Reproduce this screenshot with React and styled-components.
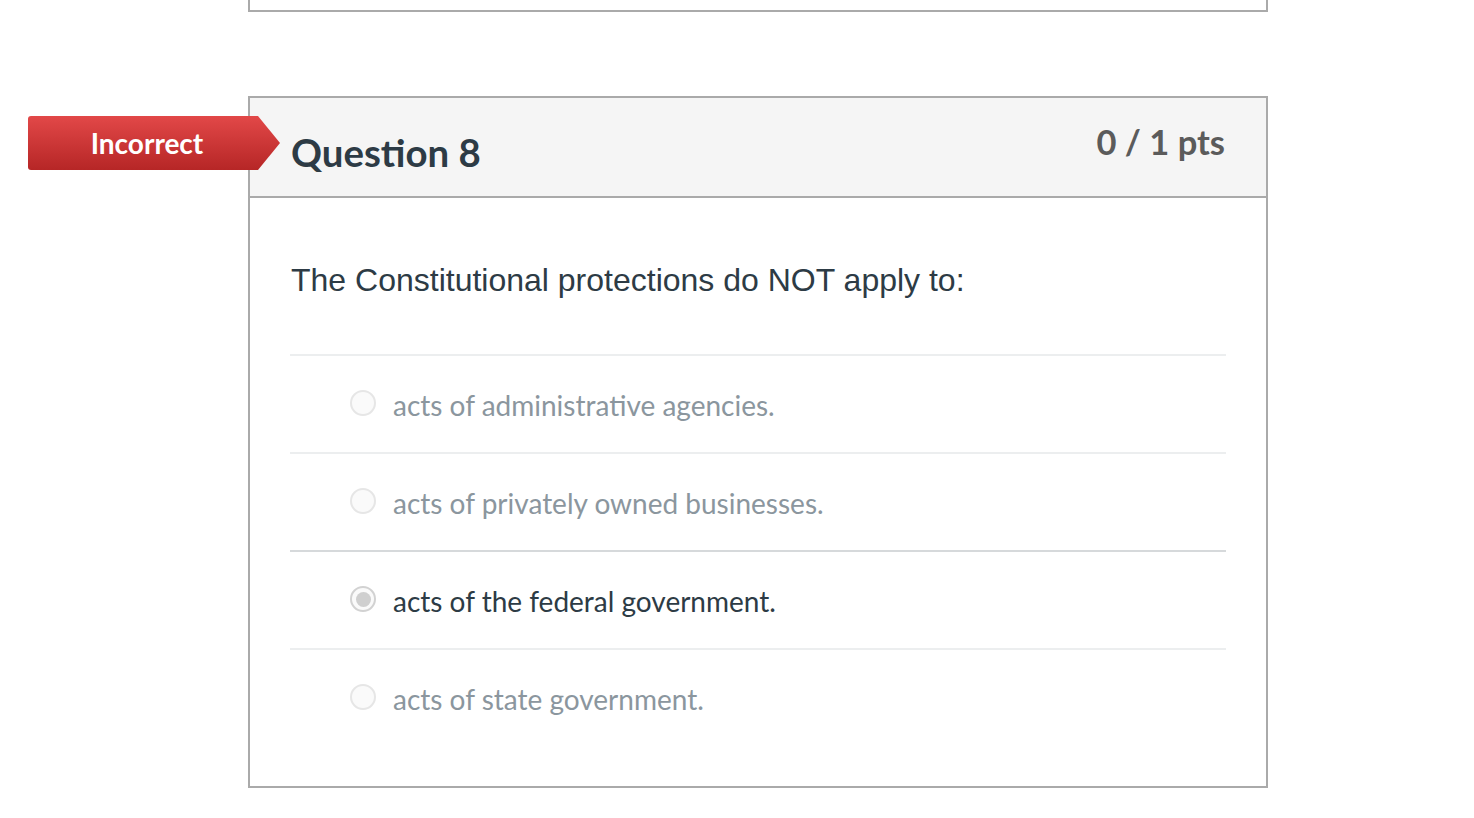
import React from 'react'
import styled, { createGlobalStyle } from 'styled-components'

const GlobalStyle = createGlobalStyle`
  body {
    margin: 0;
    background: #fff;
    font-family: Lato, "Open Sans", sans-serif;
  }
`

const answers = [
  { text: 'acts of administrative agencies.', selected: false },
  { text: 'acts of privately owned businesses.', selected: false },
  { text: 'acts of the federal government.', selected: true },
  { text: 'acts of state government.', selected: false },
]

const App = () => (
  <Page>
    <GlobalStyle />
    <PrevCard />
    <Card>
      <Badge>Incorrect</Badge>
      <Header>
        <Title>Question 8</Title>
        <Points>0 / 1 pts</Points>
      </Header>
      <Body>
        <QuestionText>The Constitutional protections do NOT apply to:</QuestionText>
        <Answers>
          {answers.map((a) => (
            <Answer key={a.text} selected={a.selected}>
              <Radio selected={a.selected} />
              <AnswerText selected={a.selected}>{a.text}</AnswerText>
            </Answer>
          ))}
        </Answers>
      </Body>
    </Card>
  </Page>
)

const Page = styled.div`
  width: 1020px;
  margin-left: 248px;
`

const PrevCard = styled.div`
  height: 10px;
  border: 2px solid #aaa;
  border-top: none;
`

const Card = styled.div`
  position: relative;
  margin-top: 84px;
  border: 2px solid #aaa;
`

// ribbon that sticks out to the left of the card
const Badge = styled.div`
  position: absolute;
  left: -222px;
  top: 18px;
  width: 252px;
  height: 54px;
  box-sizing: border-box;
  padding-right: 14px;
  display: flex;
  align-items: center;
  justify-content: center;
  color: #fff;
  font-weight: 700;
  font-size: 28px;
  background: linear-gradient(#e24848, #b62626);
  clip-path: polygon(0 0, 230px 0, 252px 50%, 230px 100%, 0 100%);
  border-radius: 3px 0 0 3px;
`

const Header = styled.div`
  height: 98px;
  background: #f5f5f5;
  border-bottom: 2px solid #aaa;
  display: flex;
  justify-content: space-between;
  padding: 0 41px 0 41px;
`

const Title = styled.h2`
  margin: 0;
  padding-top: 31px;
  font-size: 38.4px;
  font-weight: 700;
  color: #2d3b45;
`

const Points = styled.div`
  padding-top: 23px;
  font-size: 34.5px;
  font-weight: 700;
  color: #5b5b5b;
`

const Body = styled.div`
  padding: 0 40px 40px 40px;
`

const QuestionText = styled.p`
  margin: 0;
  padding: 64px 0 55px 1px;
  font-family: "Liberation Sans", Arial, sans-serif;
  font-size: 32px;
  color: #2d3b45;
`

const Answers = styled.div``

const Answer = styled.div`
  height: 94px;
  padding-top: 2px;
  display: flex;
  align-items: center;
  padding-left: 60px;
  border-top: 2px solid ${(p) => (p.selected ? '#d6d9db' : '#eceeef')};
`

const Radio = styled.span`
  width: 22px;
  height: 22px;
  margin-bottom: 4px;
  border-radius: 50%;
  border: 2px solid #e6e6e6;
  background: #fafafa;
  display: flex;
  align-items: center;
  justify-content: center;
  &::after {
    content: '';
    display: ${(p) => (p.selected ? 'block' : 'none')};
    width: 15px;
    height: 15px;
    border-radius: 50%;
    background: #cfcfcf;
  }
  ${(p) => p.selected && 'border-color: #d2d2d2;'}
`

const AnswerText = styled.span`
  margin-left: 17px;
  font-size: 28px;
  color: ${(p) => (p.selected ? '#2d3b45' : '#8b969e')};
`

export default App
